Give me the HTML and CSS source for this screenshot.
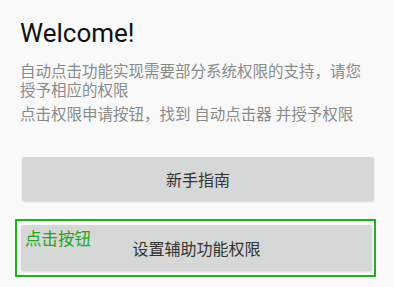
FILE: index.html
```html
<!DOCTYPE html>
<html lang="zh-CN">
<head>
    <meta charset="UTF-8">
    <meta name="viewport" content="width=device-width, initial-scale=1.0">
    <title>Welcome</title>
    <link rel="stylesheet" href="styles.css">
</head>
<body>
    <div class="page">
        <h1>Welcome!</h1>

        <!-- Texto de explicação -->
        <p class="desc">自动点击功能实现需要部分系统权限的支持，请您授予相应的权限</p>
        <p class="desc step">点击权限申请按钮，找到 自动点击器 并授予权限</p>

        <div class="actions">
            <button class="btn">新手指南</button>

            <div class="highlight">
                <span class="hint">点击按钮</span>
                <button class="btn btn-tall">设置辅助功能权限</button>
            </div>
        </div>
    </div>
</body>
</html>
```

FILE: styles.css
```css
* {
    margin: 0;
    padding: 0;
    box-sizing: border-box;
}

body {
    background-color: #f9f9f9;
    font-family: Roboto, "Noto Sans CJK SC", sans-serif;
    color: #222;
}

.page {
    padding: 18px 20px 0 20px;
}

.page h1 {
    font-size: 26px;
    line-height: 30px;
    font-weight: normal;
    color: #111;
}

.desc {
    font-size: 15.5px;
    line-height: 19px;
    color: #8a8a8a;
    margin-top: 15px;
}

.desc.step {
    margin-top: 5px;
}

.actions {
    margin-top: 32px;
}

.btn {
    display: block;
    width: 352px;
    height: 44px;
    margin-left: 2px;
    background-color: #d6d7d7;
    border: none;
    border-radius: 2px;
    box-shadow: 0 1px 2px rgba(0, 0, 0, 0.12);
    font-family: Roboto, "Noto Sans CJK SC", sans-serif;
    font-size: 16px;
    color: #333;
    cursor: pointer;
}

.highlight {
    position: relative;
    width: 361px;
    margin-top: 18px;
    margin-left: -5px;
    border: 2px solid #1db31d;
    padding: 4px 2px 4px 4px;
}

.highlight .btn {
    margin-left: 0;
    width: 100%;
}

.btn-tall {
    height: 46px;
}

.hint {
    position: absolute;
    left: 8px;
    top: 9px;
    font-size: 16.5px;
    line-height: 20px;
    color: #22a622;
}
```
